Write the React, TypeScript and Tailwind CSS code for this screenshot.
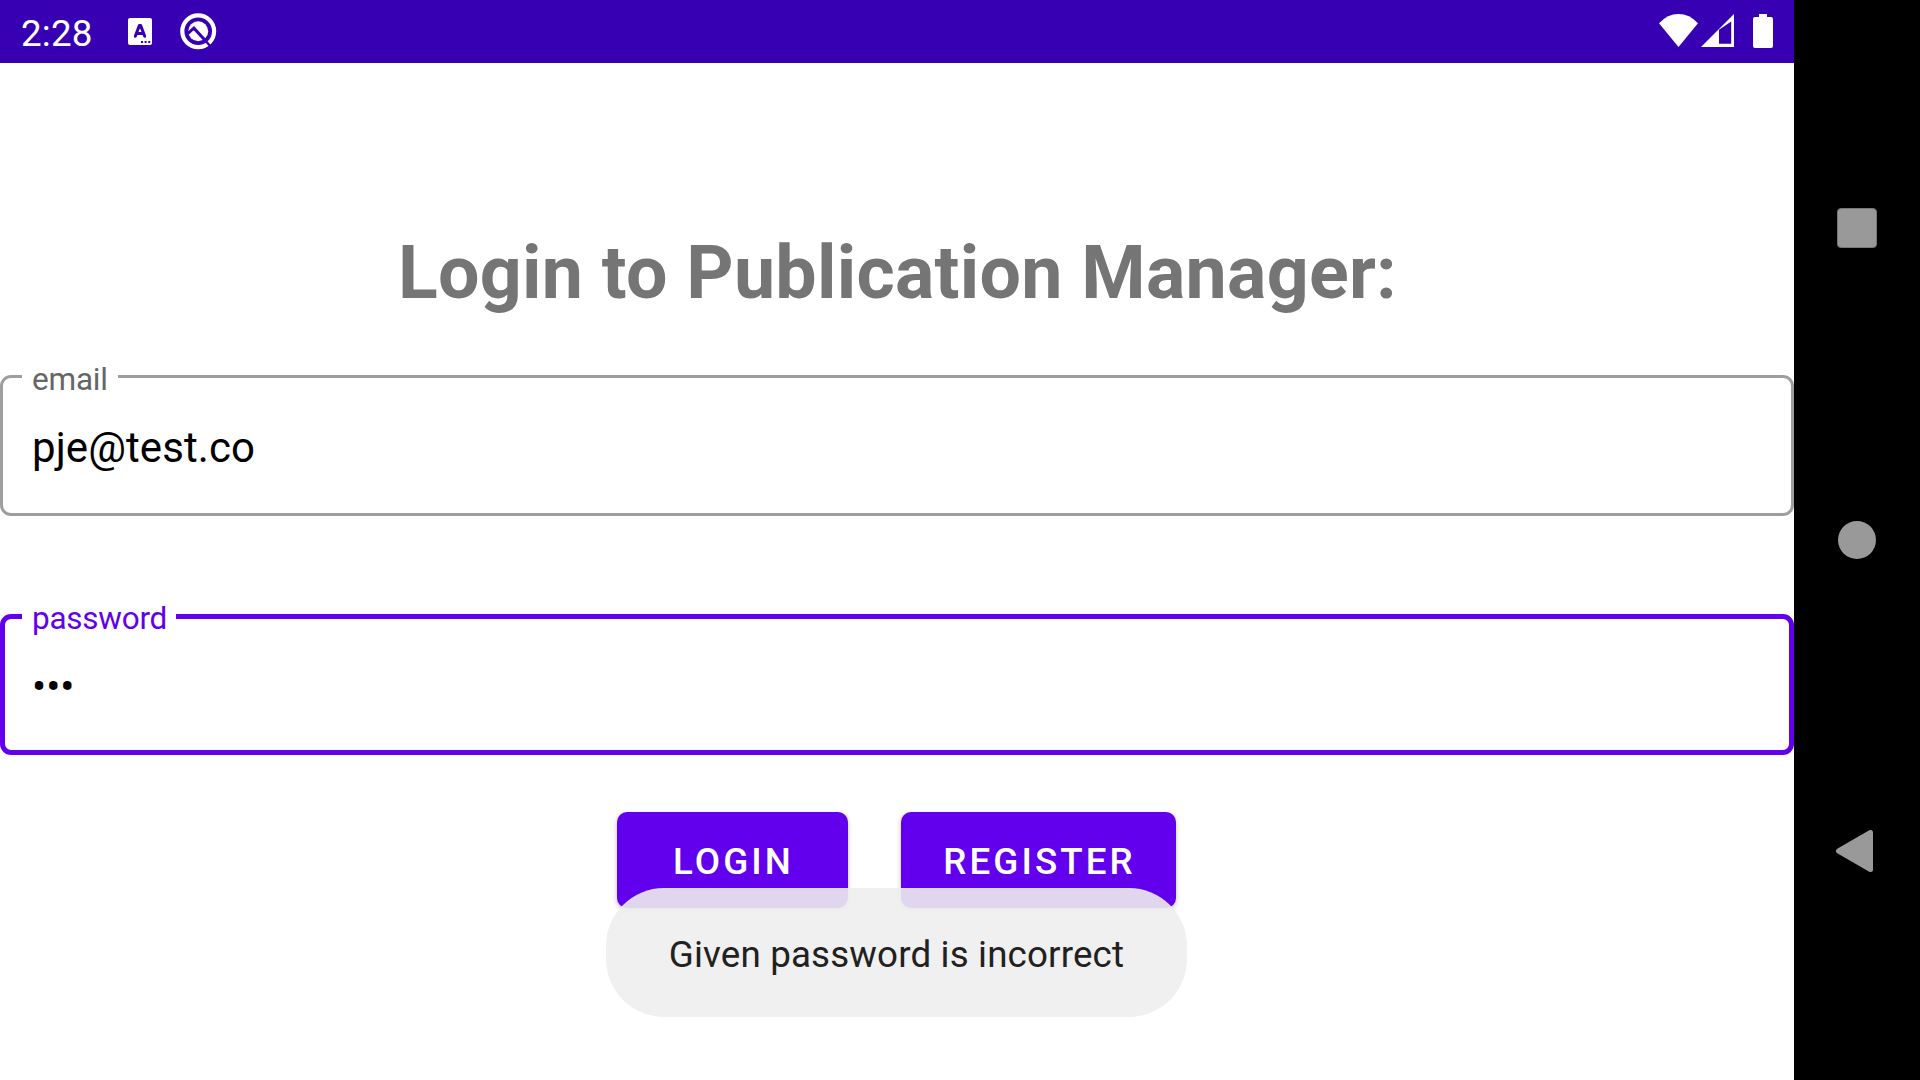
import React from "react";

function StatusBar() {
  return (
    <header className="flex h-[63px] shrink-0 items-start justify-between bg-[#3700b3] text-white">
      <div className="flex items-start pl-[21px]">
        <span className="mt-[12px] w-[107px] text-[36.75px] leading-[44px] tracking-[0.2px]">2:28</span>
        <svg className="mt-[18px]" width="24" height="27" viewBox="0 0 24 27">
          <rect width="24" height="27" rx="2" fill="#fff" />
          <path d="M7.3 18.3 L11.3 7.6 H12.7 L16.7 18.3 M8.8 15.4 H15.2" fill="none" stroke="#3700b3" strokeWidth="3" strokeLinejoin="round" strokeLinecap="round" />
          <path d="M13 23h2v2h-2zM16.6 23h2v2h-2zM20.2 23h2v2h-2z" fill="#3700b3" />
        </svg>
        <svg className="ml-[28px] mt-[13px]" width="37" height="37" viewBox="0 0 37 37">
          <circle cx="18.2" cy="18.3" r="15.9" fill="none" stroke="#fff" strokeWidth="4.2" />
          <circle cx="18.2" cy="18.3" r="10" fill="#fff" />
          <path d="M7.6 20.6 L13.9 15.2 L25.3 27.6" fill="none" stroke="#3700b3" strokeWidth="3" />
          <path d="M24 26 L31 34" fill="none" stroke="#3700b3" strokeWidth="2.4" />
        </svg>
      </div>
      <div className="flex items-start pr-[21px] pt-[14px]">
        <svg width="39" height="33" viewBox="0 0 39 33">
          <path d="M19.5 33 L0 9.3 Q8.5 0 19.5 0 Q30.5 0 39 9.3 Z" fill="#fff" />
        </svg>
        <svg className="ml-[3px]" width="33" height="33" viewBox="0 0 33 33">
          <path fillRule="evenodd" d="M0 33 L33 0 V33 Z M18 15.7 V29.8 H30.2 V7.6 Z" fill="#fff" />
        </svg>
        <svg className="ml-[19px]" width="20" height="34" viewBox="0 0 20 34">
          <path d="M6 0h8v3h4a2 2 0 0 1 2 2v27a2 2 0 0 1-2 2H2a2 2 0 0 1-2-2V5a2 2 0 0 1 2-2h4z" fill="#fff" />
        </svg>
      </div>
    </header>
  );
}

function NavigationBar() {
  return (
    <nav className="flex w-[126px] shrink-0 flex-col items-center bg-black pt-[208px]">
      <div className="size-[40px] rounded-[4px] border border-[#777] bg-[#999]" />
      <div className="mt-[273px] size-[38px] rounded-full bg-[#999]" />
      <svg className="mr-[5px] mt-[271px]" width="37" height="42" viewBox="0 0 37 42">
        <path d="M2.5 21 L34.5 2.5 V39.5 Z" fill="#999" stroke="#999" strokeWidth="5" strokeLinejoin="round" />
      </svg>
    </nav>
  );
}

export default function App() {
  return (
    <div className="flex h-[1080px] w-[1920px] overflow-hidden bg-white font-['Roboto',sans-serif]">
      <main className="relative flex w-[1794px] flex-col">
        <StatusBar />
        <h1 className="mt-[167px] pl-px text-center text-[73.5px] font-bold leading-[86px] tracking-[0.28px] text-[#757575]">
          Login to Publication Manager:
        </h1>
        <div className="relative mt-[59px] flex h-[141px] items-center rounded-[11px] border-[3px] border-[#9e9e9e] pl-[29px]">
          <label className="absolute left-[19px] top-[-17px] w-[96px] bg-white pl-[10px] text-[31.5px] leading-[37px] tracking-[-0.2px] text-[#666]">
            email
          </label>
          <span className="pt-[5px] text-[42px] leading-[50px] tracking-[0.1px] text-black">pje@test.co</span>
        </div>
        <div className="relative mt-[98px] flex h-[141px] items-center rounded-[11px] border-[5px] border-[#6200ee] pl-[27px]">
          <label className="absolute left-[17px] top-[-19px] w-[154px] bg-white pl-[10px] text-[31.5px] leading-[37px] tracking-[-0.25px] text-[#6200ee]">
            password
          </label>
          <span className="pt-[5px] text-[42px] leading-[50px] text-black">•••</span>
        </div>
        <div className="mt-[57px] flex gap-[53px] pl-[617px] text-[36.75px] font-medium leading-[44px] tracking-[3.05px] text-white">
          <button className="h-[96px] w-[231px] rounded-[10px] bg-[#6200ee] pl-[2px] pt-[4px] shadow-[0_2px_5px_rgba(0,0,0,0.25)]">LOGIN</button>
          <button className="h-[96px] w-[275px] rounded-[10px] bg-[#6200ee] pl-[2px] pt-[4px] shadow-[0_2px_5px_rgba(0,0,0,0.25)]">REGISTER</button>
        </div>
        <div className="absolute left-[606px] top-[888px] flex h-[129px] w-[581px] items-center justify-center rounded-[58px] bg-[#eeeeee]/90 pt-[5px] text-[36.75px] leading-[44px] tracking-[0.15px] text-[#212121]">
          Given password is incorrect
        </div>
      </main>
      <NavigationBar />
    </div>
  );
}
